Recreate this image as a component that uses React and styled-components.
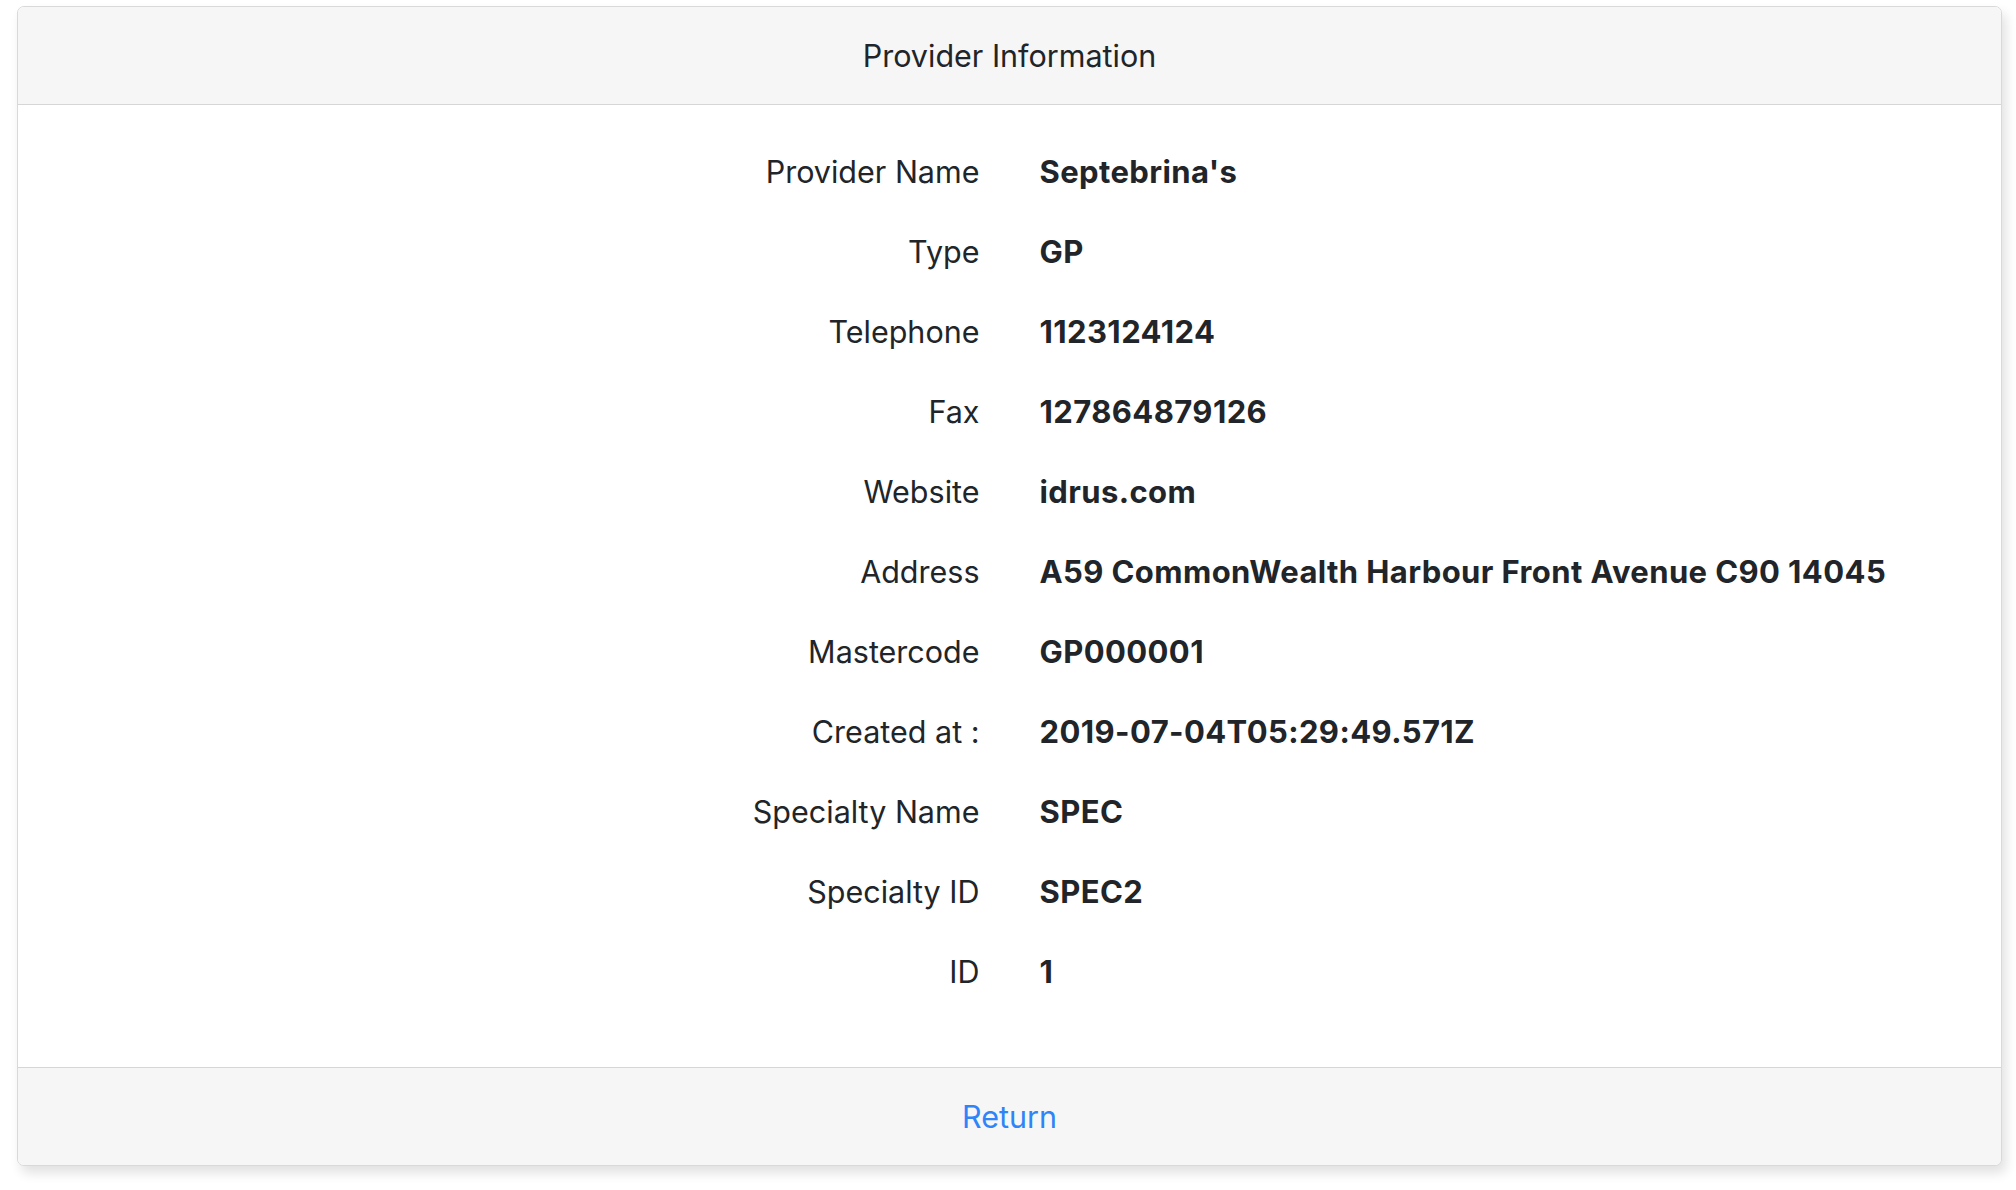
import React from "react";
import styled, { createGlobalStyle } from "styled-components";

const Global = createGlobalStyle`
  html, body { margin: 0; padding: 0; background: #ffffff; }
  body { font-family: Inter, "Noto Sans", "Liberation Sans", sans-serif; color: #212529; }
`;

const Page = styled.div`
  padding: 6px 14px 24px 17px;
`;

const Card = styled.section`
  background: #fff;
  border: 1px solid #d9d9d9;
  border-radius: 7px;
  box-shadow: 4px 7px 12px rgba(0, 0, 0, 0.12);
  overflow: hidden;
`;

const Header = styled.header`
  height: 97px;
  display: flex;
  align-items: center;
  justify-content: center;
  background: #f6f6f6;
  border-bottom: 1px solid #d6d6d6;
  font-size: 30.5px;
  color: #212529;
`;

const Body = styled.div`
  padding: 26px 0 56px;
`;

const Row = styled.div`
  display: grid;
  grid-template-columns: 1fr 1fr;
  height: 80px;
  align-items: center;
`;

const Label = styled.div`
  text-align: right;
  padding-right: 30px;
  font-size: 30.5px;
  color: #212529;
`;

const Value = styled.div`
  padding-left: 30px;
  font-size: 31px;
  letter-spacing: 0.4px;
  font-weight: 700;
  color: #212529;
  white-space: nowrap;
`;

const Footer = styled.footer`
  height: 97px;
  display: flex;
  align-items: center;
  justify-content: center;
  background: #f6f6f6;
  border-top: 1px solid #d6d6d6;
`;

const LinkButton = styled.a`
  font-size: 30.5px;
  color: #2f84f8;
  text-decoration: none;
  cursor: pointer;
`;

const rows = [
  ["Provider Name", "Septebrina's"],
  ["Type", "GP"],
  ["Telephone", "1123124124"],
  ["Fax", "127864879126"],
  ["Website", "idrus.com"],
  ["Address", "A59 CommonWealth Harbour Front Avenue C90 14045"],
  ["Mastercode", "GP000001"],
  ["Created at :", "2019-07-04T05:29:49.571Z"],
  ["Specialty Name", "SPEC"],
  ["Specialty ID", "SPEC2"],
  ["ID", "1"],
];

export default function App() {
  return (
    <>
      <Global />
      <Page>
        <Card>
          <Header>Provider Information</Header>
          <Body>
            {rows.map(([k, v]) => (
              <Row key={k}>
                <Label>{k}</Label>
                <Value>{v}</Value>
              </Row>
            ))}
          </Body>
          <Footer>
            <LinkButton>Return</LinkButton>
          </Footer>
        </Card>
      </Page>
    </>
  );
}
